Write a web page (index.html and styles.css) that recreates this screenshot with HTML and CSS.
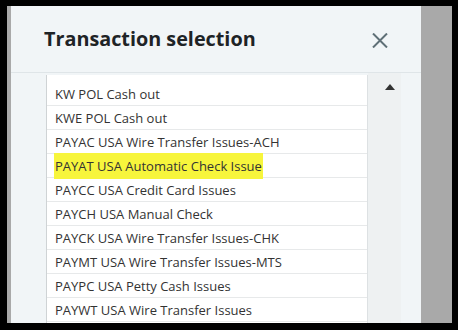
FILE: index.html
```html
<!DOCTYPE html>
<html>
<head>
<meta charset="utf-8">
<link rel="stylesheet" href="styles.css">
</head>
<body>
<div class="frame">
  <div class="dialog">
    <div class="header">
      <h1 class="title">Transaction selection</h1>
      <svg class="close" width="16" height="15" viewBox="0 0 16 15"><path d="M1 0.5 L15 14.5 M15 0.5 L1 14.5" stroke="#5f7077" stroke-width="2" fill="none"/></svg>
    </div>
    <div class="body">
      <ul class="list">
        <li class="row">KW POL Cash out</li>
        <li class="row">KWE POL Cash out</li>
        <li class="row">PAYAC USA Wire Transfer Issues-ACH</li>
        <li class="row"><span class="hl">PAYAT USA Automatic Check Issue</span></li>
        <li class="row">PAYCC USA Credit Card Issues</li>
        <li class="row">PAYCH USA Manual Check</li>
        <li class="row">PAYCK USA Wire Transfer Issues-CHK</li>
        <li class="row">PAYMT USA Wire Transfer Issues-MTS</li>
        <li class="row">PAYPC USA Petty Cash Issues</li>
        <li class="row">PAYWT USA Wire Transfer Issues</li>
      </ul>
      <div class="scrollbar"><span class="arrow"></span></div>
    </div>
  </div>
</div>
</body>
</html>
```
FILE: styles.css
```css
html, body {
  margin: 0;
  padding: 0;
  background: #000;
  width: 458px;
  height: 330px;
  overflow: hidden;
}
.frame {
  margin: 6px 0 0 7px;
  width: 445px;
  height: 317px;
  background: #a9a9a9;
  display: flex;
  padding-left: 4px;
  box-sizing: border-box;
}
.dialog {
  width: 410px;
  height: 317px;
  background: #f1f5f7;
  display: flex;
  flex-direction: column;
  overflow: hidden;
}
.header {
  height: 67px;
  flex: none;
  border-bottom: 1px solid #dfe5e8;
  display: flex;
  align-items: center;
  justify-content: space-between;
  padding: 0 33px 0 33px;
  box-sizing: border-box;
}
.title {
  margin: 0;
  font-family: "Open Sans", "Liberation Sans", sans-serif;
  font-weight: 700;
  font-size: 19.8px;
  color: #1e2326;
  position: relative;
  top: -1px;
}
.close {
  display: block;
  position: relative;
  top: 1px;
}
.body {
  flex: 1;
  display: flex;
  padding: 2px 0 0 35px;
  overflow: hidden;
}
.list {
  list-style: none;
  margin: 0;
  padding: 7px 0 0 0;
  width: 322px;
  flex: none;
  background: #fff;
  border-left: 1px solid #cfd3d5;
  border-right: 1px solid #dde1e3;
  box-sizing: border-box;
}
.row {
  height: 24px;
  border-bottom: 1px solid #e7e9ea;
  box-sizing: border-box;
  padding-left: 8px;
  display: flex;
  align-items: center;
  font-family: "Open Sans", "Liberation Sans", sans-serif;
  font-size: 13px;
  color: #333;
  white-space: nowrap;
}
.hl {
  background: #f7f53c;
  padding: 4px 1px 4px 1px;
  margin-left: -1px;
}
.scrollbar {
  width: 33px;
  flex: none;
  background: #eef1f2;
  display: flex;
  justify-content: center;
  align-items: flex-start;
  padding: 11px 0 0 10px;
  box-sizing: border-box;
  margin-top: -2px;
}
.arrow {
  width: 0;
  height: 0;
  border-left: 5px solid transparent;
  border-right: 5px solid transparent;
  border-bottom: 6px solid #333;
}
```
